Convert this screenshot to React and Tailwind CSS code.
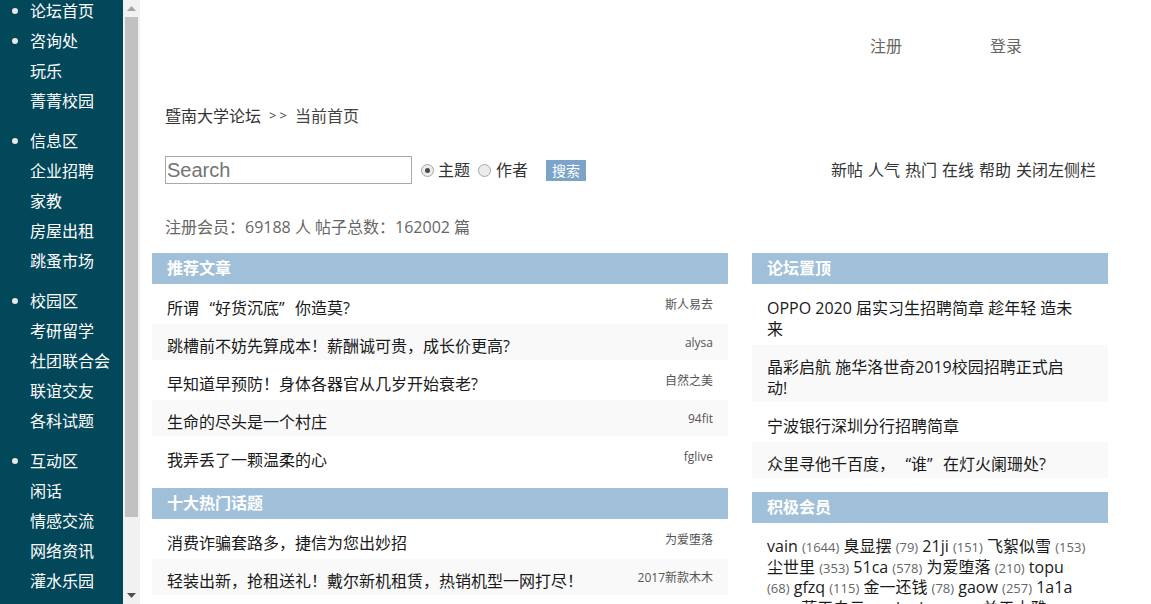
import React from "react";

const sidebar = [
  ["论坛首页"],
  ["咨询处", "玩乐", "菁菁校园"],
  ["信息区", "企业招聘", "家教", "房屋出租", "跳蚤市场"],
  ["校园区", "考研留学", "社团联合会", "联谊交友", "各科试题"],
  ["互动区", "闲话", "情感交流", "网络资讯", "灌水乐园"],
];

const Q1 = () => <span className="inline-block w-[1em] text-right">“</span>;
const Q2 = () => <span className="inline-block w-[1em] text-left">”</span>;

const recommend = [
  [<>所谓<Q1 />好货沉底<Q2 />你造莫?</>, "斯人易去", "r1"],
  ["跳槽前不妨先算成本！薪酬诚可贵，成长价更高?", "alysa", "r2"],
  ["早知道早预防！身体各器官从几岁开始衰老?", "自然之美", "r3"],
  ["生命的尽头是一个村庄", "94fit", "r4"],
  ["我弄丢了一颗温柔的心", "fglive", "r5"],
];

const hot = [
  ["消费诈骗套路多，捷信为您出妙招", "为爱堕落", "h1"],
  ["轻装出新，抢租送礼！戴尔新机租赁，热销机型一网打尽！", "2017新款木木", "h2"],
];

const pinned = [
  ["OPPO 2020 届实习生招聘简章 趁年轻 造未来", "p1"],
  ["晶彩启航 施华洛世奇2019校园招聘正式启动!", "p2"],
  ["宁波银行深圳分行招聘简章", "p3"],
  [<>众里寻他千百度，<Q1 />谁<Q2 />在灯火阑珊处?</>, "p4"],
];

// each entry: [name, count]; "BR" marks a forced line break
const members = [
  ["vain", "1644"], ["臭显摆", "79"], ["21ji", "151"], ["飞絮似雪", "153"], "BR",
  ["尘世里", "353"], ["51ca", "578"], ["为爱堕落", "210"], ["topu", null], "BR",
  [null, "68"], ["gfzq", "115"], ["金一还钱", "78"], ["gaow", "257"], ["1a1a", null], "BR",
  [null, "412"], ["蓝天白云", "96"], ["lookme", "88"], ["关于大雅", "65"],
];

function PanelHeader({ title }) {
  return (
    <h2 className="h-[31px] bg-[#a0bfd9] pl-[15px] flex items-center text-white font-bold text-[16px] leading-[21px]">
      {title}
    </h2>
  );
}

function Radio({ checked }) {
  return (
    <span className="w-[13px] h-[13px] rounded-full border border-[#a6a6a6] bg-[#ececec] flex items-center justify-center shrink-0">
      {checked && <span className="w-[5px] h-[5px] rounded-full bg-[#4a4a4a]" />}
    </span>
  );
}

function Row({ title, author, gray }) {
  return (
    <li className={`mt-[2px] h-[36px] pt-[12px] px-[15px] flex justify-between items-start ${gray ? "bg-[#f9f9f9]" : ""}`}>
      <span className="text-[16px] leading-[21px] text-[#1a1a1a]">{title}</span>
      <span className="text-[12px] leading-[14px] text-[#555]">{author}</span>
    </li>
  );
}

export default function App() {
  return (
    <div className="flex w-full h-[604px] overflow-hidden bg-white font-['Open_Sans','Noto_Sans_CJK_SC',sans-serif]">
      {/* Sidebar */}
      <nav className="w-[123px] shrink-0 bg-[#03475a] overflow-hidden text-white text-[16px]">
        <ul className="mt-[-4px]">
          {sidebar.map((group, gi) => (
            <li key={gi} className={gi >= 1 ? "mb-[10px]" : ""}>
              <div className="h-[30px] flex items-center">
                <span className="w-[6px] h-[6px] rounded-full bg-[#e8e8e8] ml-[12px] mr-[12px]" />
                <span>{group[0]}</span>
              </div>
              {group.length > 1 && (
                <ul>
                  {group.slice(1).map((s) => (
                    <li key={s} className="h-[30px] flex items-center pl-[30px]">
                      {s}
                    </li>
                  ))}
                </ul>
              )}
            </li>
          ))}
        </ul>
      </nav>

      {/* Scrollbar of the sidebar */}
      <div className="w-[17px] shrink-0 bg-[#f1f1f1] flex flex-col items-center">
        <div className="h-[17px] flex items-center justify-center">
          <svg width="9" height="5" viewBox="0 0 9 5"><path d="M0 5 L4.5 0 L9 5 Z" fill="#a3a3a3" /></svg>
        </div>
        <div className="w-[13px] h-[500px] bg-[#c1c1c1]" />
        <div className="flex-1" />
        <div className="h-[17px] flex items-center justify-center">
          <svg width="9" height="5" viewBox="0 0 9 5"><path d="M0 0 L4.5 5 L9 0 Z" fill="#505050" /></svg>
        </div>
      </div>

      {/* Main */}
      <main className="flex-1 pl-[12px] pr-[43px]">
        <div className="h-[92px] flex items-center justify-end pr-[42px] text-[16px] text-[#666]">
          <a className="w-[120px] text-center">注册</a>
          <a className="w-[120px] text-center">登录</a>
        </div>

        <div className="h-[48px] flex items-center pl-[13px] text-[16px] text-[#333]">
          <span>暨南大学论坛</span>
          <span className="ml-[8px] mr-[5px] text-[13px] tracking-[3px] text-[#444]">&gt;&gt;</span>
          <span className="text-[#444]">当前首页</span>
        </div>

        <div className="h-[60px] flex items-center pl-[13px] pr-[12px] text-[16px] text-[#333]">
          <input
            placeholder="Search"
            className="w-[247px] h-[28px] border border-[#a9a9a9] px-[1px] text-[20px] font-['Liberation_Sans',Arial,sans-serif] placeholder:text-[#757575] outline-none"
          />
          <span className="ml-[9px]"><Radio checked /></span>
          <span className="ml-[4px]">主题</span>
          <span className="ml-[8px]"><Radio /></span>
          <span className="ml-[5px]">作者</span>
          <button className="ml-[18px] w-[40px] h-[21px] bg-[#7ba4c8] text-white text-[14px] leading-[21px]">搜索</button>
          <div className="ml-auto flex gap-[5px]">
            {["新帖", "人气", "热门", "在线", "帮助", "关闭左侧栏"].map((t) => (
              <a key={t}>{t}</a>
            ))}
          </div>
        </div>

        <div className="h-[53px] flex items-center pl-[13px] text-[16px] text-[#666]">
          注册会员：69188 人 帖子总数：162002 篇
        </div>

        <div className="grid grid-cols-[576px_356px] gap-x-[24px]">
          <div>
            <section className="mb-[14px]">
              <PanelHeader title="推荐文章" />
              <ul>
                {recommend.map(([t, a, k], i) => (
                  <Row key={k} title={t} author={a} gray={i % 2 === 1} />
                ))}
              </ul>
            </section>
            <section className="mb-[14px]">
              <PanelHeader title="十大热门话题" />
              <ul>
                {hot.map(([t, a, k], i) => (
                  <Row key={k} title={t} author={a} gray={i % 2 === 1} />
                ))}
              </ul>
            </section>
          </div>

          <div>
            <section className="mb-[14px]">
              <PanelHeader title="论坛置顶" />
              <ul>
                {pinned.map(([t, k], i) => (
                  <li key={k} className={`mt-[2px] pt-[12px] pb-[3px] pl-[15px] ${i % 2 ? "bg-[#f9f9f9]" : ""}`}>
                    <span className="block w-[312px] text-[16px] leading-[21px] text-[#1a1a1a]">{t}</span>
                  </li>
                ))}
              </ul>
            </section>
            <section>
              <PanelHeader title="积极会员" />
              <p className="pt-[13px] pl-[15px] pr-[4px] leading-[20.5px] text-[16px] text-[#1a1a1a] whitespace-nowrap">
                {members.map((m, i) =>
                  m === "BR" ? (
                    <br key={i} />
                  ) : (
                    <React.Fragment key={i}>
                      {m[0] && <>{m[0]} </>}
                      {m[1] && (
                        <>
                          <span className="text-[13px] leading-[1] text-[#666]">({m[1]})</span>{" "}
                        </>
                      )}
                    </React.Fragment>
                  )
                )}
              </p>
            </section>
          </div>
        </div>
      </main>
    </div>
  );
}
